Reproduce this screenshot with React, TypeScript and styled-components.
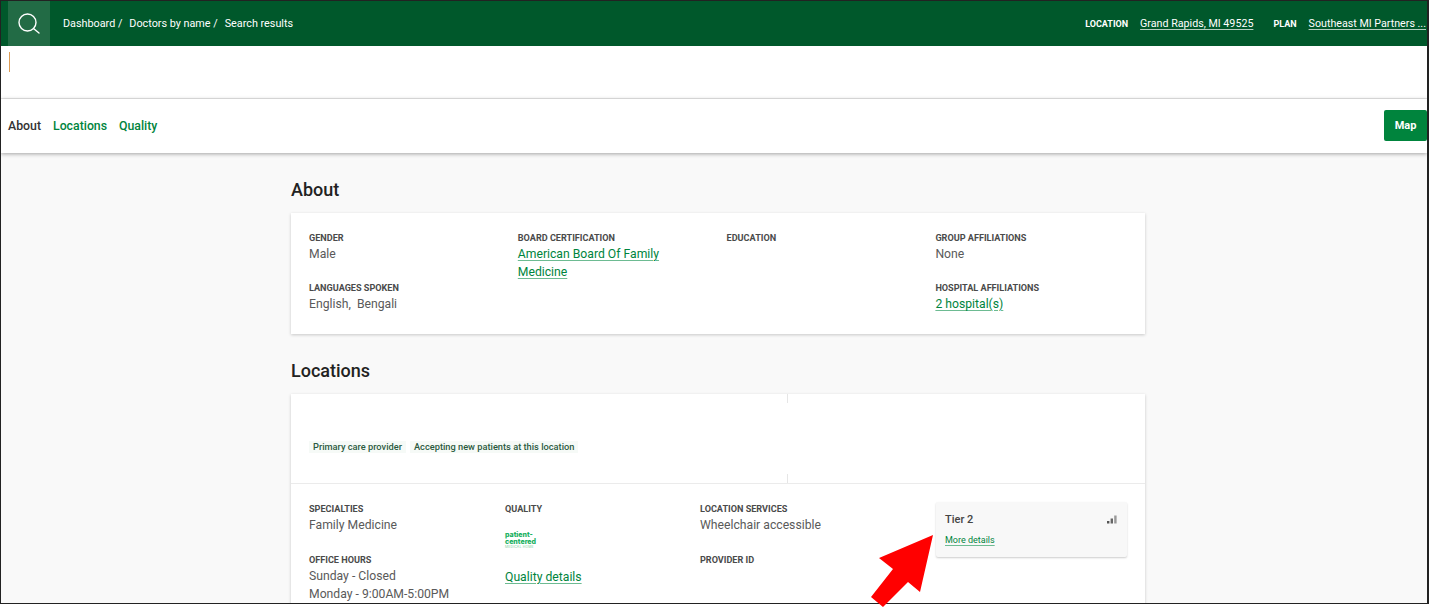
import { createGlobalStyle, styled } from 'styled-components'

const green = '#00843d'

const GlobalStyle = createGlobalStyle`
  html, body {
    margin: 0;
    padding: 0;
    background: #fff;
  }
  body {
    font-family: Roboto, "Liberation Sans", sans-serif;
    overflow: hidden;
  }
`

const Page = styled.div`
  position: relative;
  width: 1429px;
  height: 608px;
  overflow: hidden;
`

const Frame = styled.div`
  width: 1429px;
  height: 604px;
  box-sizing: border-box;
  border: 1px solid #222;
  border-right-width: 2px;
  overflow: hidden;
  background: #f9f9f9;
`

const TopBar = styled.header`
  height: 45px;
  background: #00582b;
  display: flex;
  align-items: center;
  color: #fff;
  font-size: 10.8px;
`

const SearchButton = styled.div`
  width: 42px;
  height: 45px;
  margin-left: 7px;
  background: #226b45;
  display: flex;
  align-items: center;
  justify-content: center;
`

const Crumbs = styled.nav`
  display: flex;
  gap: 7px;
  margin-left: 13px;
  flex: 1;
`

const Meta = styled.div`
  display: flex;
  align-items: center;
  margin-right: 1px;
`

const MetaLabel = styled.span`
  font-size: 9px;
  font-weight: 700;
  margin-left: 20px;
  margin-right: 12px;
`

const MetaLink = styled.a`
  color: #fff;
  font-size: 10.7px;
  text-decoration: underline;
  text-underline-offset: 2px;
  text-decoration-color: #b5cfc0;
`

const NameRow = styled.div`
  height: 53px;
  background: #fff;
  border-bottom: 1px solid #e8e8e8;
  box-sizing: border-box;
  padding: 6px 0 0 8px;
`

const Caret = styled.div`
  width: 1px;
  height: 20px;
  background: #dd9c55;
`

const TabBar = styled.div`
  height: 54px;
  box-sizing: border-box;
  padding: 0 0 2px 7px;
  background: #fff;
  box-shadow: 0 1px 4px rgba(0, 0, 0, 0.35);
  display: flex;
  align-items: center;
  position: relative;
  font-size: 12.3px;
  font-weight: 500;
`

const Tab = styled.span<{ $active?: boolean }>`
  color: ${({ $active }) => ($active ? '#333' : green)};
  margin: 2px 12px 0 0;
`

const MapButton = styled.button`
  margin-left: auto;
  width: 43px;
  height: 31px;
  border: 0;
  border-radius: 2px;
  background: ${green};
  color: #fff;
  font: 700 11px Roboto, sans-serif;
  padding: 0;
`

const Content = styled.main`
  width: 854px;
  margin-left: 290px;
`

const SectionTitle = styled.h2`
  margin: 0;
  height: 60px;
  box-sizing: border-box;
  padding-top: 26px;
  font-size: 18px;
  line-height: 21px;
  font-weight: 500;
  color: #222;
`

const Card = styled.section`
  background: #fff;
  box-shadow: 0 1px 3px rgba(0, 0, 0, 0.2);
`

const AboutGrid = styled.div`
  height: 121px;
  box-sizing: border-box;
  padding: 19px 18px 0;
  display: grid;
  grid-template-columns: repeat(4, 208.8px);
`

const Field = styled.div`
  margin-bottom: 19px;
`

const LocationField = styled(Field)`
  margin-bottom: 20px;
`

const Label = styled.div`
  font-size: 9.1px;
  line-height: 12px;
  font-weight: 700;
  color: #4a4a4a;
  text-transform: uppercase;
`

const Value = styled.div`
  font-size: 12.2px;
  line-height: 18px;
  color: #5a5a5a;
  margin-top: 1px;

  & + & {
    margin-top: 0;
  }
`

const DataLink = styled.a`
  color: ${green};
  text-decoration: underline;
  text-underline-offset: 2px;
  text-decoration-color: #6dbb92;
`

const LocationHead = styled.div`
  height: 90px;
  border-bottom: 1px solid #ebebeb;
  box-sizing: border-box;
  padding: 47px 18px 0;
  display: flex;
  gap: 4px;
  position: relative;
`

const HeadTick = styled.i<{ $bottom?: boolean }>`
  position: absolute;
  left: 496px;
  width: 1px;
  height: 9px;
  background: #e6e6e6;
  ${({ $bottom }) => ($bottom ? 'bottom: 0;' : 'top: 0;')}
`

const Tag = styled.span`
  height: 12px;
  line-height: 12px;
  padding: 0 4px;
  font-size: 9.25px;
  font-weight: 500;
  color: #2c5a3f;
  background: #f6faf7;
`

const LocationBody = styled.div`
  padding: 19px 18px 0;
  display: grid;
  grid-template-columns: 196px 195px 236px 191px;
  height: 140px;
`

const Logo = styled.div`
  margin-top: 16px;
  height: 25px;
  color: #16b060;
  font-size: 7px;
  line-height: 7px;
  font-weight: 800;
  font-family: Inter, sans-serif;
`

const LogoSub = styled.div`
  font-size: 3.4px;
  line-height: 5px;
  font-weight: 400;
  letter-spacing: 0.2px;
  color: #7fcfa3;
`

const QualityLink = styled(Value)`
  margin-top: 12px;
`

const TierCard = styled.div`
  height: 55px;
  margin-top: -1px;
  box-sizing: border-box;
  padding: 11px 10px 0 9px;
  background: #f8f8f8;
  border-radius: 2px;
  box-shadow: 0 1px 2px rgba(0, 0, 0, 0.2);
`

const TierHead = styled.div`
  display: flex;
  justify-content: space-between;
  align-items: center;
  font-size: 11px;
  line-height: 14px;
  font-weight: 500;
  color: #444;
`

const TierLink = styled(DataLink)`
  display: block;
  margin-top: 7px;
  font-size: 9px;
  line-height: 12px;
`

const SignalIcon = styled.svg`
  margin-top: -2px;
`

const Arrow = styled.svg`
  position: absolute;
  left: 869px;
  top: 533px;
`

const Signal = () => (
  <SignalIcon width="10" height="9" viewBox="0 0 10 9">
    <rect x="0" y="6" width="2.4" height="2.5" fill="#555" />
    <rect x="3.6" y="3.5" width="2.4" height="5" fill="#666" />
    <rect x="7.2" y="0.5" width="2.4" height="8" fill="#999" />
  </SignalIcon>
)

export default function App() {
  return (
    <Page>
      <GlobalStyle />
      <Frame>
        <TopBar>
          <SearchButton>
            <svg width="24" height="24" viewBox="0 0 24 24" fill="none" stroke="#fff" strokeWidth="1.4" strokeLinecap="round">
              <circle cx="10.5" cy="10.5" r="8.5" />
              <path d="M16.8 16.8 22 21" />
            </svg>
          </SearchButton>
          <Crumbs>
            <span>Dashboard /</span>
            <span>Doctors by name /</span>
            <span>Search results</span>
          </Crumbs>
          <Meta>
            <MetaLabel>LOCATION</MetaLabel>
            <MetaLink>Grand Rapids, MI 49525</MetaLink>
            <MetaLabel>PLAN</MetaLabel>
            <MetaLink>Southeast MI Partners ...</MetaLink>
          </Meta>
        </TopBar>
        <NameRow>
          <Caret />
        </NameRow>
        <TabBar>
          <Tab $active>About</Tab>
          <Tab>Locations</Tab>
          <Tab>Quality</Tab>
          <MapButton>Map</MapButton>
        </TabBar>
        <Content>
          <SectionTitle>About</SectionTitle>
          <Card>
            <AboutGrid>
              <div>
                <Field>
                  <Label>Gender</Label>
                  <Value>Male</Value>
                </Field>
                <Field>
                  <Label>Languages spoken</Label>
                  <Value>English,&nbsp; Bengali</Value>
                </Field>
              </div>
              <div>
                <Field>
                  <Label>Board certification</Label>
                  <Value>
                    <DataLink>American Board Of Family<br />Medicine</DataLink>
                  </Value>
                </Field>
              </div>
              <div>
                <Field>
                  <Label>Education</Label>
                </Field>
              </div>
              <div>
                <Field>
                  <Label>Group affiliations</Label>
                  <Value>None</Value>
                </Field>
                <Field>
                  <Label>Hospital affiliations</Label>
                  <Value>
                    <DataLink>2 hospital(s)</DataLink>
                  </Value>
                </Field>
              </div>
            </AboutGrid>
          </Card>
          <SectionTitle>Locations</SectionTitle>
          <Card>
            <LocationHead>
              <HeadTick />
              <HeadTick $bottom />
              <Tag>Primary care provider</Tag>
              <Tag>Accepting new patients at this location</Tag>
            </LocationHead>
            <LocationBody>
              <div>
                <LocationField>
                  <Label>Specialties</Label>
                  <Value>Family Medicine</Value>
                </LocationField>
                <LocationField>
                  <Label>Office hours</Label>
                  <Value>Sunday - Closed</Value>
                  <Value>Monday - 9:00AM-5:00PM</Value>
                </LocationField>
              </div>
              <div>
                <Label>Quality</Label>
                <Logo>
                  patient-
                  <br />
                  centered
                  <LogoSub>MEDICAL HOME</LogoSub>
                </Logo>
                <QualityLink>
                  <DataLink>Quality details</DataLink>
                </QualityLink>
              </div>
              <div>
                <LocationField>
                  <Label>Location services</Label>
                  <Value>Wheelchair accessible</Value>
                </LocationField>
                <LocationField>
                  <Label>Provider ID</Label>
                </LocationField>
              </div>
              <TierCard>
                <TierHead>
                  Tier 2
                  <Signal />
                </TierHead>
                <TierLink>More details</TierLink>
              </TierCard>
            </LocationBody>
          </Card>
        </Content>
      </Frame>
      <Arrow width="66" height="75" viewBox="0 0 66 75">
        <polygon points="64,2 51,59 39,49 14,74 2,64 24,36 10,25" fill="#ff0000" />
      </Arrow>
    </Page>
  )
}
